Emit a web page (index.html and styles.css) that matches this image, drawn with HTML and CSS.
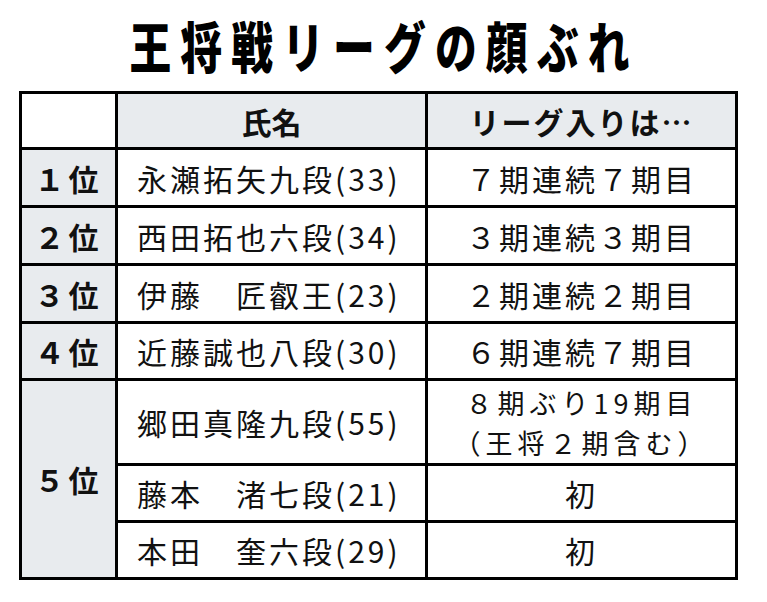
FILE: index.html
```html
<!DOCTYPE html>
<html lang="ja">
<head>
<meta charset="utf-8">
<title>王将戦リーグの顔ぶれ</title>
<link rel="stylesheet" href="styles.css">
</head>
<body>
<div class="page">
  <h1 class="title"><span class="title-text">王将戦リーグの顔ぶれ</span></h1>
  <div class="table">
    <div class="cell head blank"></div>
    <div class="cell head">氏名</div>
    <div class="cell head head-wide">リーグ入りは…</div>

    <div class="cell rank">１位</div>
    <div class="cell name">永瀬拓矢九段(33)</div>
    <div class="cell result">７期連続７期目</div>

    <div class="cell rank">２位</div>
    <div class="cell name">西田拓也六段(34)</div>
    <div class="cell result">３期連続３期目</div>

    <div class="cell rank">３位</div>
    <div class="cell name">伊藤　匠叡王(23)</div>
    <div class="cell result">２期連続２期目</div>

    <div class="cell rank">４位</div>
    <div class="cell name">近藤誠也八段(30)</div>
    <div class="cell result">６期連続７期目</div>

    <div class="cell rank rank5">５位</div>
    <div class="cell name">郷田真隆九段(55)</div>
    <div class="cell result two">８期ぶり19期目<br>（王将２期含む）</div>

    <div class="cell name">藤本　渚七段(21)</div>
    <div class="cell result">初</div>

    <div class="cell name">本田　奎六段(29)</div>
    <div class="cell result">初</div>
  </div>
</div>
</body>
</html>
```

FILE: styles.css
```css
html, body {
  margin: 0;
  padding: 0;
  background: #ffffff;
}

body {
  font-family: "Noto Sans CJK JP", "Noto Sans", sans-serif;
  color: #111111;
}

.page {
  width: 719px;
  margin-left: 19px;
}

.title {
  margin: 0;
  height: 91px;
  padding-bottom: 2px;
  box-sizing: border-box;
  display: flex;
  align-items: center;
  justify-content: center;
  overflow: visible;
}

.title-text {
  display: inline-block;
  white-space: nowrap;
  font-size: 55px;
  font-weight: 900;
  line-height: 1;
  letter-spacing: 12px;
  margin-right: -12px;
  transform: scaleX(0.76);
  transform-origin: center center;
  color: #000000;
}

.table {
  display: grid;
  grid-template-columns: 93px 307px 307px;
  grid-template-rows: 53px 55px 55px 55px 54px 82px 54px 54px;
  gap: 3px;
  padding: 3px;
  background: #000000;
  width: 719px;
  box-sizing: border-box;
}

.cell {
  background: #ffffff;
  display: flex;
  align-items: center;
  font-size: 30px;
  line-height: 1.2;
  white-space: nowrap;
}

.head {
  background: #e8ebee;
  justify-content: center;
  font-weight: 700;
}

.head-wide {
  letter-spacing: 2px;
}

.head.blank {
  background: #ffffff;
}

.rank {
  background: #e8ebee;
  justify-content: center;
  font-weight: 700;
  letter-spacing: 4px;
}

.rank5 {
  grid-row: span 3;
}

.name {
  justify-content: flex-start;
  padding-left: 19px;
  letter-spacing: 3px;
}

.result {
  justify-content: center;
  letter-spacing: 3px;
  text-align: center;
}

.result.two {
  font-size: 27px;
  letter-spacing: 5px;
  line-height: 39.5px;
  padding-top: 1px;
}
```
